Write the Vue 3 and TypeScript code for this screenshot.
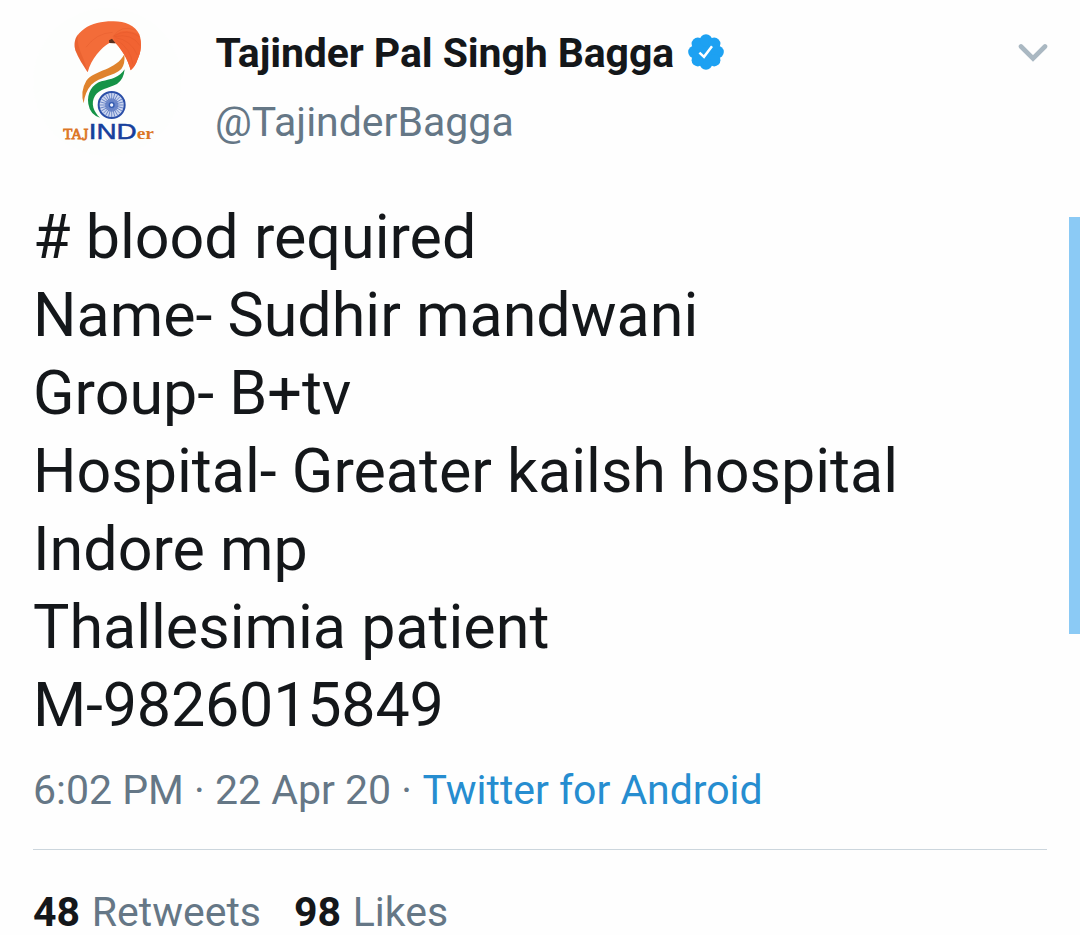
<script setup lang="ts">
const lines: string[] = [
  '# blood required',
  'Name- Sudhir mandwani',
  'Group- B+tv',
  'Hospital- Greater kailsh hospital',
  'Indore mp',
  'Thallesimia patient',
  'M-9826015849',
]
const spokes: number[] = Array.from({ length: 24 }, (_, i) => i * 15)
const lobes: number[] = Array.from({ length: 8 }, (_, i) => (i * Math.PI) / 4)
</script>

<template>
  <main class="tweet">
    <header class="head">
      <svg class="avatar" viewBox="0 0 480 480">
        <circle cx="232" cy="246" r="222" fill="#fdfefd" />
        <path d="M173 217C160 197 145 174 136 151C129 122 139 103 163 86C186 70 214 64 247 64C283 63 315 76 328 103C337 129 333 158 323 178Q316 199 302 211C297 190 283 158 258 130L238 129C214 143 184 175 173 217Z" fill="#f36c39" />
        <path d="M173 217C160 197 145 174 136 151Q129 124 143 103C141 153 160 160 173 217Z" fill="#d95223" opacity=".35" />
        <path d="M302 211C297 190 283 158 257 130L249 111Q276 80 326 103C337 129 333 158 323 178Q316 199 302 211Z" fill="#f16332" />
        <g fill="none" stroke="#d54f23" stroke-width="2" opacity=".35">
          <path d="M168 142Q199 99 248 97M249 110Q274 72 318 91M251 108Q291 84 328 110M253 110Q305 98 330 137M256 113Q302 119 322 165M260 120Q302 145 309 194" />
        </g>
        <path d="M237 121L246 116L257 130L238 129Z" fill="#59311f" />
        <path d="M283 163Q286 192 274 207C250 229 210 230 184 254Q164 277 161 310Q150 274 169 242C194 210 259 211 283 163Z" fill="#df832d" />
        <path d="M284 208Q281 239 261 252C233 266 208 267 195 287C181 310 191 335 210 353Q180 344 175 312C170 280 187 252 214 244C245 237 268 233 284 208Z" fill="#159347" />
        <circle cx="245" cy="315" r="39" fill="#cdd7f0" stroke="#2b4fa8" stroke-width="6" />
        <g stroke="#4668b7" stroke-width="2">
          <line v-for="a in spokes" :key="a" x1="245" y1="315" x2="245" y2="279" :transform="`rotate(${a} 245 315)`" />
        </g>
        <circle cx="245" cy="315" r="20" fill="#5f7cc4" opacity=".75" />
        <circle cx="245" cy="315" r="7" fill="#eff3ff" stroke="#3159b0" stroke-width="4" />
        <text x="100" y="418" class="taj" textLength="56" lengthAdjust="spacingAndGlyphs">TA</text>
        <text x="157" y="421" class="taj jay" textLength="18" lengthAdjust="spacingAndGlyphs">J</text>
        <text x="176" y="418" class="ind" textLength="144" lengthAdjust="spacingAndGlyphs">IND</text>
        <text x="320" y="416" class="er" textLength="52" lengthAdjust="spacingAndGlyphs">er</text>
      </svg>
      <div class="who">
        <div class="name-row">
          <span class="name">Tajinder Pal Singh Bagga</span>
          <svg class="badge" viewBox="0 0 36 36">
            <g fill="#1da1f2">
              <circle cx="18" cy="18" r="14.5" />
              <circle v-for="a in lobes" :key="a" :cx="18 + 11.6 * Math.cos(a)" :cy="18 + 11.6 * Math.sin(a)" r="6.2" />
            </g>
            <path d="M11.4 18.6L16 22.8L24 12.2" fill="none" stroke="#fff" stroke-width="2.5" />
          </svg>
        </div>
        <div class="handle">@TajinderBagga</div>
      </div>
      <svg class="chevron" viewBox="0 0 30 20">
        <path d="M3 3.5L15 15.5L27 3.5" fill="none" stroke="#aab8c2" stroke-width="4.6" stroke-linecap="round" />
      </svg>
    </header>
    <div class="body">
      <div v-for="line in lines" :key="line" class="line">{{ line }}</div>
    </div>
    <div class="meta">6:02 PM · 22 Apr 20 · <span class="source">Twitter for Android</span></div>
    <footer class="stats">
      <span class="retweets"><b>48</b> Retweets</span>
      <span class="likes"><b>98</b> Likes</span>
    </footer>
    <div class="scrollbar"></div>
  </main>
</template>

<style>
html, body { margin: 0; background: #fefefe; overflow: hidden; }
</style>

<style scoped>
.tweet {
  position: relative;
  box-sizing: border-box;
  width: 1080px;
  height: 935px;
  padding: 0 33px;
  overflow: hidden;
  background: #fefefe;
  color: #14171a;
  font-family: Roboto, sans-serif;
}
.head { display: flex; height: 198px; }
.avatar { flex: none; width: 160px; height: 160px; margin-left: -3px; }
.taj, .er { font-family: "Liberation Serif", serif; font-size: 46px; fill: #dc7626; stroke: #dc7626; stroke-width: 2.5; }
.jay { font-size: 52px; }
.er { font-size: 52px; font-weight: bold; stroke: none; }
.ind { font-family: "Liberation Sans", sans-serif; font-size: 64px; fill: #17409c; stroke: #17409c; stroke-width: 1.5; }
.who { flex: 1; padding: 29px 0 0 25px; white-space: nowrap; }
.name-row { display: flex; height: 48px; line-height: 48px; }
.name { padding-left: 0.5px; font-size: 41px; font-weight: 700; letter-spacing: -0.1px; }
.badge { width: 36px; height: 36px; margin: 4.5px 0 0 14px; }
.handle { margin-top: 21px; font-size: 41px; line-height: 48px; color: #657786; }
.chevron { flex: none; width: 30px; height: 20px; margin: 43px -1px 0 0; }
.body { font-size: 61px; line-height: 78px; white-space: nowrap; }
.line:last-child { letter-spacing: -0.2px; }
.meta { margin-top: 22px; font-size: 41px; line-height: 48px; height: 84px; border-bottom: 1px solid #ccd6dd; color: #657786; white-space: nowrap; box-sizing: border-box; }
.source { margin-left: 0.4px; letter-spacing: -0.05px; color: #268dd0; }
.stats { display: flex; gap: 33px; margin-top: 38px; font-size: 41px; line-height: 48px; color: #657786; white-space: nowrap; }
.stats b { margin-right: 1.5px; color: #14171a; font-weight: 700; }
.scrollbar { position: absolute; top: 217px; right: 0; width: 11px; height: 417px; background: #8bcaf5; }
</style>
